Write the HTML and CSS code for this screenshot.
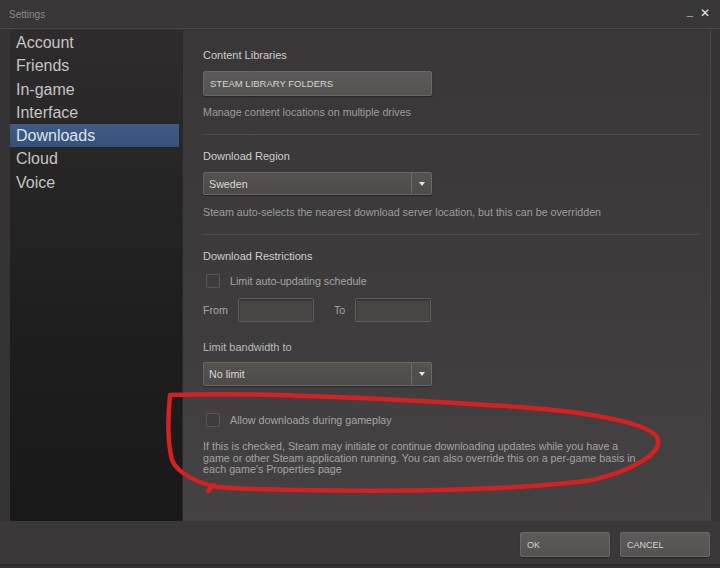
FILE: index.html
```html
<!DOCTYPE html>
<html>
<head>
<meta charset="utf-8">
<link rel="stylesheet" href="styles.css">
</head>
<body>
<div class="window">
  <div class="titlebar">
    <span class="title">Settings</span>
    <span class="controls"><span class="min">_</span><span class="close">✕</span></span>
  </div>
  <div class="main">
    <nav class="sidebar">
      <div class="nav-item">Account</div>
      <div class="nav-item">Friends</div>
      <div class="nav-item">In-game</div>
      <div class="nav-item">Interface</div>
      <div class="nav-item active">Downloads</div>
      <div class="nav-item">Cloud</div>
      <div class="nav-item">Voice</div>
    </nav>
    <section class="content">
      <div class="heading h-first">Content Libraries</div>
      <div class="btn wide-btn">STEAM LIBRARY FOLDERS</div>
      <div class="desc">Manage content locations on multiple drives</div>
      <div class="sep"></div>

      <div class="heading">Download Region</div>
      <div class="select"><span class="sel-text">Sweden</span><span class="sel-arrow"></span></div>
      <div class="desc d2">Steam auto-selects the nearest download server location, but this can be overridden</div>
      <div class="sep"></div>

      <div class="heading">Download Restrictions</div>
      <div class="check-row r1"><span class="checkbox"></span><span class="check-label">Limit auto-updating schedule</span></div>
      <div class="time-row">
        <span class="time-label">From</span><span class="input"></span>
        <span class="time-label to">To</span><span class="input"></span>
      </div>
      <div class="heading h-band">Limit bandwidth to</div>
      <div class="select s2"><span class="sel-text">No limit</span><span class="sel-arrow"></span></div>
      <div class="check-row r2"><span class="checkbox"></span><span class="check-label">Allow downloads during gameplay</span></div>
      <p class="para">If this is checked, Steam may initiate or continue downloading updates while you have a game or other Steam application running. You can also override this on a per-game basis in each game's Properties page</p>
    </section>
  </div>
  <div class="footer">
    <div class="btn foot-btn">OK</div>
    <div class="btn foot-btn">CANCEL</div>
  </div>
</div>
<svg class="markup" width="720" height="568" viewBox="0 0 720 568">
  <path d="M 170 395 C 240 392, 380 398, 520 407 C 600 413, 648 424, 657 437 C 664 452, 635 470, 592 480 C 520 490, 400 492, 300 490 C 255 489, 225 489, 212 486 C 190 480, 176 470, 172 460 C 167 440, 168 415, 170 395 Z" fill="none" stroke="#d42222" stroke-width="4.5" stroke-linejoin="round"/>
  <path d="M 214 485 L 208 491" fill="none" stroke="#d42222" stroke-width="4.5" stroke-linecap="round"/>
</svg>
</body>
</html>
```

FILE: styles.css
```css
html, body {
  margin: 0;
  padding: 0;
}
body {
  width: 720px;
  height: 568px;
  background: #353333;
  font-family: "Liberation Sans", Arial, sans-serif;
  color: #c9c7c7;
  position: relative;
  overflow: hidden;
}
.window {
  display: flex;
  flex-direction: column;
  height: 568px;
}
.titlebar {
  height: 29px;
  display: flex;
  align-items: center;
  justify-content: space-between;
  padding: 0 10px 0 9px;
  background: #383636;
  border-bottom: 1px solid #4a4848;
  box-sizing: border-box;
}
.title {
  font-size: 10px;
  color: #8c8a8a;
}
.controls {
  display: flex;
  gap: 7px;
  align-items: center;
  margin-top: -3px;
}
.min {
  font-size: 11px;
  color: #b5b3b3;
  margin-top: -4px;
}
.close {
  font-size: 12px;
  color: #e8e8e8;
  font-family: "DejaVu Sans", sans-serif;
}
.main {
  display: flex;
  height: 491px;
  margin: 1px 9px 0 10px;
  border-right: 1px solid #4b4949;
}
.sidebar {
  width: 173px;
  background: linear-gradient(#2e2c2c, #1f1e1e 60%, #1a1919);
  border-right: 1px solid #2a2828;
  box-sizing: border-box;
  padding-top: 1px;
}
.nav-item {
  height: 23.3px;
  line-height: 23.3px;
  font-size: 16px;
  padding-left: 6px;
  color: #c6c4c4;
  margin-right: 3px;
}
.nav-item.active {
  background: linear-gradient(#3f5c84, #36507a);
  color: #dde3ec;
}
.content {
  flex: 1;
  background: linear-gradient(#393737, #3d3b3b 50%, #444242);
  padding: 18px 0 0 20px;
  box-sizing: border-box;
}
.heading {
  font-size: 11px;
  line-height: 14px;
  height: 14px;
  color: #cfcdcd;
  margin-top: 14px;
}
.heading.h-first {
  margin-top: 0;
}
.heading.h-band {
  margin-top: 18px;
  color: #bdbbbb;
}
.btn {
  background: linear-gradient(#5d5a5a, #555252);
  border: 1px solid #6b6868;
  border-radius: 2px;
  box-sizing: border-box;
  color: #d6d4d4;
  font-size: 9.5px;
  display: flex;
  align-items: center;
  padding-left: 6px;
  box-shadow: 0 1px 1px rgba(0,0,0,0.35);
}
.wide-btn {
  width: 229px;
  height: 25px;
  margin-top: 9px;
}
.desc {
  font-size: 10.7px;
  line-height: 14px;
  color: #9f9d9d;
  margin-top: 9px;
}
.desc.d2 {
  margin-top: 10px;
}
.sep {
  height: 1px;
  background: #4d4b4b;
  margin: 15px 10px 0 0;
}
.select {
  width: 229px;
  height: 23px;
  margin-top: 9px;
  display: flex;
  align-items: center;
  background: linear-gradient(#55524f, #4d4a4a);
  border: 1px solid #6a6767;
  border-radius: 2px;
  box-sizing: border-box;
  box-shadow: 0 1px 1px rgba(0,0,0,0.35);
}
.select.s2 {
  height: 24px;
  margin-top: 8px;
}
.sel-text {
  flex: 1;
  font-size: 10.7px;
  color: #dcdada;
  padding-left: 5px;
}
.sel-arrow {
  width: 20px;
  height: 100%;
  border-left: 1px solid #6d6a6a;
  display: flex;
  align-items: center;
  justify-content: center;
  box-sizing: border-box;
}
.sel-arrow::after {
  content: "";
  border-left: 3.5px solid transparent;
  border-right: 3.5px solid transparent;
  border-top: 4px solid #e6e6e6;
}
.check-row {
  display: flex;
  align-items: center;
  height: 15px;
  margin-top: 10px;
}
.check-row.r2 {
  margin-top: 27px;
  height: 14px;
}
.checkbox {
  width: 14px;
  height: 14px;
  margin-left: 3px;
  box-sizing: border-box;
  border: 1px solid #595656;
  background: #3e3c3c;
  border-radius: 1px;
}
.check-label {
  margin-left: 10px;
  font-size: 10.7px;
  color: #a7a5a5;
}
.time-row {
  display: flex;
  align-items: center;
  height: 24px;
  margin-top: 10px;
}
.time-label {
  font-size: 10.7px;
  color: #a7a5a5;
  width: 35px;
}
.time-label.to {
  width: 21px;
  margin-left: 20px;
}
.input {
  width: 76px;
  height: 24px;
  box-sizing: border-box;
  background: #484545;
  border: 1px solid #5f5c5c;
  border-radius: 2px;
  box-shadow: inset 0 1px 2px rgba(0,0,0,0.4);
}
.para {
  margin: 14px 0 0 0;
  font-size: 10.7px;
  line-height: 11.5px;
  color: #a5a3a3;
  width: 438px;
}
.footer {
  height: 45px;
  display: flex;
  justify-content: flex-end;
  align-items: flex-start;
  gap: 10px;
  padding: 11px 10px 0 0;
  box-sizing: border-box;
  background: #3a3838;
  border-bottom: 2px solid #2c2a2a;
}
.foot-btn {
  width: 90px;
  height: 25px;
  font-size: 9px;
}
.markup {
  position: absolute;
  top: 0;
  left: 0;
  pointer-events: none;
}
```
